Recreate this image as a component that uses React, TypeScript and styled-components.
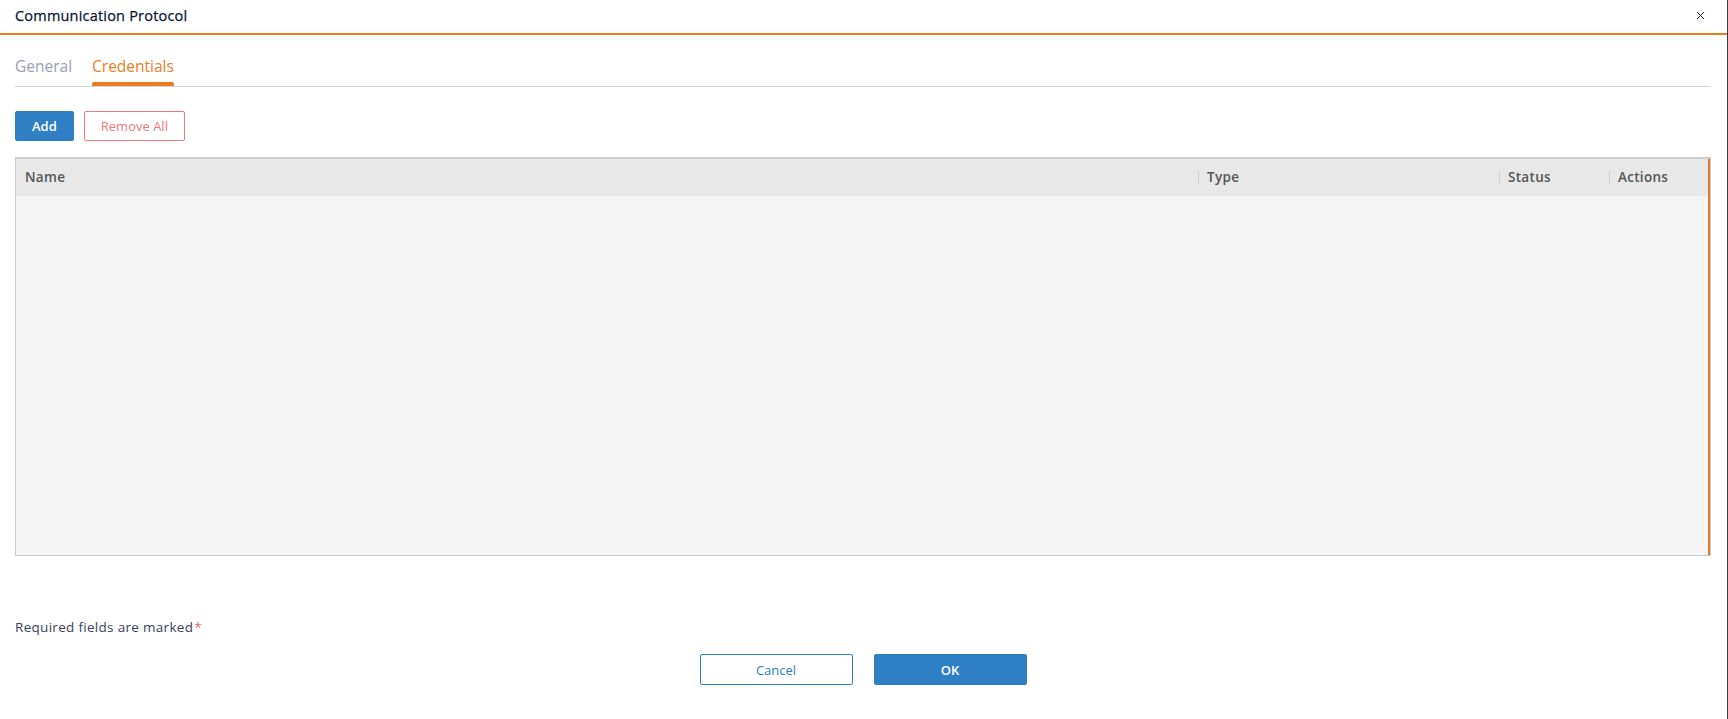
import React, { useState } from 'react';
import styled, { createGlobalStyle } from 'styled-components';

const GlobalStyle = createGlobalStyle`
  html, body {
    margin: 0;
    padding: 0;
    background: #ffffff;
  }
  body {
    font-family: 'Open Sans', 'Liberation Sans', sans-serif;
    color: #1b1f3b;
  }
  * {
    box-sizing: border-box;
  }
`;

const Dialog = styled.div`
  width: 1728px;
  height: 719px;
  background: #ffffff;
  border-right: 1px solid #3a3a3a;
  display: flex;
  flex-direction: column;
`;

const Header = styled.div`
  height: 35px;
  display: flex;
  align-items: center;
  justify-content: space-between;
  padding: 0 22px 2px 15px;
  border-bottom: 2px solid #ea7d1f;
`;

const Title = styled.h1`
  margin: 0;
  font-size: 14.5px;
  font-weight: 500;
  color: #0b1434;
  letter-spacing: 0.2px;
  -webkit-text-stroke: 0.25px #0b1434;
`;

const CloseButton = styled.button`
  border: none;
  background: none;
  padding: 0;
  width: 10px;
  height: 10px;
  display: flex;
  align-items: center;
  justify-content: center;
  cursor: pointer;
`;

const Body = styled.div`
  flex: 1;
  display: flex;
  flex-direction: column;
  padding: 0 16px 0 15px;
`;

const TabBar = styled.div`
  display: flex;
  gap: 20px;
  margin-top: 20px;
  border-bottom: 1px solid #d3d3e0;
`;

const Tab = styled.button<{ active?: boolean }>`
  border: none;
  background: none;
  padding: 0 0 9px;
  font-family: inherit;
  font-size: 15.5px;
  color: ${p => (p.active ? '#ea7d1f' : '#9b9db3')};
  position: relative;
  cursor: pointer;

  &::after {
    content: '';
    position: absolute;
    left: 0;
    right: 0;
    bottom: 0;
    height: 4px;
    border-radius: 2px 2px 0 0;
    background: ${p => (p.active ? '#ea7d1f' : 'transparent')};
  }
`;

const Toolbar = styled.div`
  display: flex;
  gap: 10px;
  margin-top: 24px;
`;

const Button = styled.button<{ variant: 'primary' | 'danger' | 'outline' }>`
  height: 30px;
  border-radius: 2px;
  font-family: inherit;
  font-size: 13px;
  cursor: pointer;
  padding: 0 16px;
  border: 1px solid ${p => (p.variant === 'danger' ? '#ec7b7b' : '#2f7fc4')};
  background: ${p => (p.variant === 'primary' ? '#2f7fc4' : '#ffffff')};
  color: ${p =>
    p.variant === 'primary' ? '#ffffff' : p.variant === 'danger' ? '#ec7b7b' : '#2f7fc4'};
  font-weight: ${p => (p.variant === 'primary' ? 600 : 400)};
`;

const Table = styled.div`
  margin-top: 16px;
  height: 399px;
  border: 1px solid #cccccc;
  border-top-width: 2px;
  background: #f5f5f5;
  display: flex;
  flex-direction: column;
  box-shadow: inset -2px 0 0 #e07a2a;
`;

const HeaderRow = styled.div`
  display: grid;
  grid-template-columns: 1182px 301px 110px 1fr;
  height: 37px;
  background: #e8e8e8;
  align-items: center;
  margin-right: 2px;
`;

const HeaderCell = styled.div<{ divider?: boolean }>`
  font-size: 13.5px;
  font-weight: 600;
  color: #565656;
  letter-spacing: 0.3px;
  padding-left: 8px;
  border-left: 1px solid ${p => (p.divider ? '#d0d0d0' : 'transparent')};
  line-height: 13px;
`;

const Spacer = styled.div`
  flex: 1;
`;

const Required = styled.div`
  font-size: 13.5px;
  letter-spacing: 0.3px;
  color: #3b3d5c;
  margin-top: 62px;
`;

const Star = styled.span`
  color: #e8646e;
  margin-left: 1px;
`;

const Footer = styled.div`
  display: flex;
  justify-content: center;
  gap: 21px;
  margin-top: 18px;
  padding-bottom: 32px;
`;

const FooterButton = styled(Button)`
  width: 153px;
  height: 31px;
`;

const columns = [
  { label: 'Name', divider: false },
  { label: 'Type', divider: true },
  { label: 'Status', divider: true },
  { label: 'Actions', divider: true },
];

export default function App() {
  const [tab, setTab] = useState<'general' | 'credentials'>('credentials');

  return (
    <>
      <GlobalStyle />
      <Dialog>
        <Header>
          <Title>Communication Protocol</Title>
          <CloseButton aria-label="Close">
            <svg width="9" height="9" viewBox="0 0 9 9">
              <path d="M1 1L8 8M8 1L1 8" stroke="#1b2340" strokeWidth="1" />
            </svg>
          </CloseButton>
        </Header>
        <Body>
          <TabBar>
            <Tab active={tab === 'general'} onClick={() => setTab('general')}>
              General
            </Tab>
            <Tab active={tab === 'credentials'} onClick={() => setTab('credentials')}>
              Credentials
            </Tab>
          </TabBar>
          <Toolbar>
            <Button variant="primary">Add</Button>
            <Button variant="danger">Remove All</Button>
          </Toolbar>
          <Table>
            <HeaderRow>
              {columns.map(c => (
                <HeaderCell key={c.label} divider={c.divider}>
                  {c.label}
                </HeaderCell>
              ))}
            </HeaderRow>
            <Spacer />
          </Table>
          <Required>
            Required fields are marked<Star>*</Star>
          </Required>
          <Footer>
            <FooterButton variant="outline">Cancel</FooterButton>
            <FooterButton variant="primary">OK</FooterButton>
          </Footer>
        </Body>
      </Dialog>
    </>
  );
}
